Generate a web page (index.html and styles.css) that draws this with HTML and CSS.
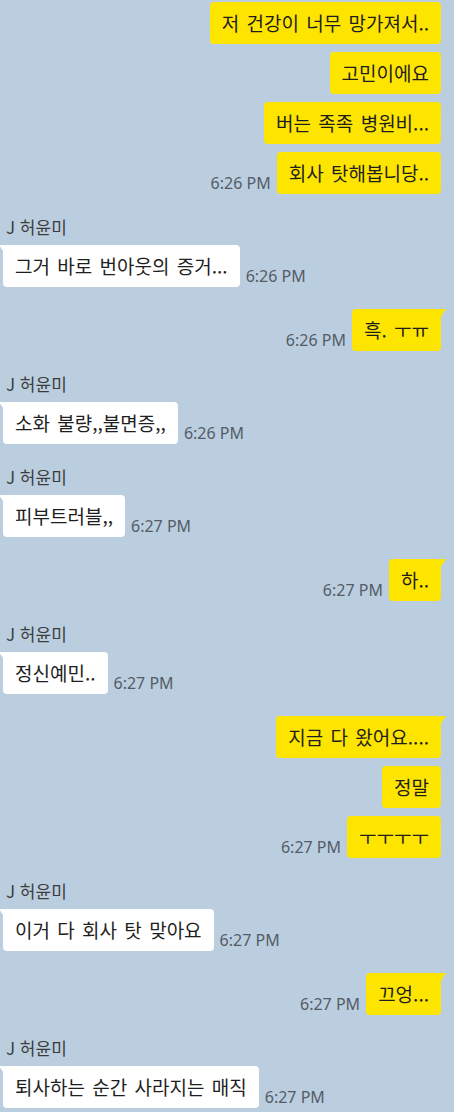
FILE: index.html
```html
<!DOCTYPE html>
<html lang="ko">
<head>
  <meta charset="UTF-8">
  <title>채팅</title>
  <link rel="stylesheet" href="styles.css">
</head>
<body>
  <div class="chat">
    <div class="group sent">
      <div class="row"><div class="bubble">저 건강이 너무 망가져서..</div></div>
      <div class="row"><div class="bubble">고민이에요</div></div>
      <div class="row"><div class="bubble">버는 족족 병원비...</div></div>
      <div class="row"><span class="time">6:26 PM</span><div class="bubble">회사 탓해봅니당..</div></div>
    </div>

    <div class="group recv">
      <div class="name">J 허윤미</div>
      <div class="row"><div class="bubble tail">그거 바로 번아웃의 증거...</div><span class="time">6:26 PM</span></div>
    </div>

    <div class="group sent">
      <div class="row"><span class="time">6:26 PM</span><div class="bubble tail">흑. ㅜㅠ</div></div>
    </div>

    <div class="group recv">
      <div class="name">J 허윤미</div>
      <div class="row"><div class="bubble tail">소화 불량,,불면증,,</div><span class="time">6:26 PM</span></div>
    </div>

    <div class="group recv">
      <div class="name">J 허윤미</div>
      <div class="row"><div class="bubble tail">피부트러블,,</div><span class="time">6:27 PM</span></div>
    </div>

    <div class="group sent">
      <div class="row"><span class="time">6:27 PM</span><div class="bubble tail">하..</div></div>
    </div>

    <div class="group recv">
      <div class="name">J 허윤미</div>
      <div class="row"><div class="bubble tail">정신예민..</div><span class="time">6:27 PM</span></div>
    </div>

    <div class="group sent">
      <div class="row"><div class="bubble tail">지금 다 왔어요....</div></div>
      <div class="row"><div class="bubble">정말</div></div>
      <div class="row"><span class="time">6:27 PM</span><div class="bubble">ㅜㅜㅜㅜ</div></div>
    </div>

    <div class="group recv">
      <div class="name">J 허윤미</div>
      <div class="row"><div class="bubble tail">이거 다 회사 탓 맞아요</div><span class="time">6:27 PM</span></div>
    </div>

    <div class="group sent">
      <div class="row"><span class="time">6:27 PM</span><div class="bubble tail">끄엉...</div></div>
    </div>

    <div class="group recv">
      <div class="name">J 허윤미</div>
      <div class="row"><div class="bubble tail">퇴사하는 순간 사라지는 매직</div><span class="time">6:27 PM</span></div>
    </div>
  </div>
</body>
</html>
```
FILE: styles.css
```css
body {
  margin: 0;
  background: #bacee0;
  font-family: "Noto Sans CJK KR", "Noto Sans", sans-serif;
}
.chat {
  padding: 2px 13px 0 3px;
  display: flex;
  flex-direction: column;
  gap: 22px;
}
.group {
  display: flex;
  flex-direction: column;
  gap: 8px;
}
.row {
  display: flex;
  align-items: flex-end;
}
.sent .row {
  justify-content: flex-end;
}
.name {
  margin: 0 0 0 3px;
  height: 21px;
  line-height: 21px;
  font-size: 17px;
  color: #3c3c3c;
}
.bubble {
  position: relative;
  padding: 10px 12px;
  line-height: 22px;
  font-size: 19px;
  word-spacing: 2px;
  color: #1e1e1e;
  border-radius: 4px;
  background: #fff;
  white-space: nowrap;
}
.sent .bubble {
  background: #fee500;
}
/* little tail on the first bubble of a group */
.bubble.tail::after {
  content: "";
  position: absolute;
  top: 0;
  width: 0;
  height: 0;
  border-top: 9px solid #fff;
}
.recv .bubble.tail::after {
  left: -4px;
  border-left: 6px solid transparent;
}
.sent .bubble.tail::after {
  right: -5px;
  border-top-color: #fee500;
  border-right: 6px solid transparent;
}
.time {
  font-family: "Noto Sans", sans-serif;
  font-size: 16px;
  line-height: 18px;
  color: #555c66;
  margin: 0 6px 2px;
  white-space: nowrap;
}
```
